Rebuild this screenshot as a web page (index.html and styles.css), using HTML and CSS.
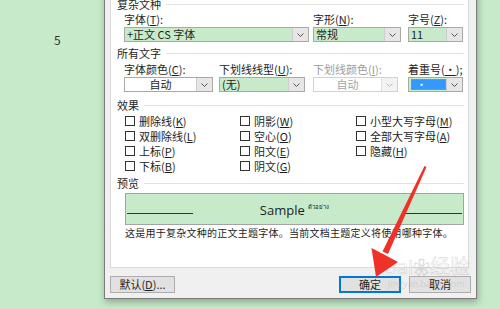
FILE: index.html
```html
<!DOCTYPE html>
<html lang="zh-CN">
<head>
    <meta charset="UTF-8">
    <title>字体</title>
    <link rel="stylesheet" href="styles.css">
</head>
<body>
<div class="page">
    <div class="side">5</div>
    <div class="dialog">
        <div class="panel">
            <div class="group-title">复杂文种</div>
            <div class="fields">
                <div class="field w-font">
                    <label>字体(<u>T</u>):</label>
                    <div class="combo green"><span class="value">+正文 CS 字体</span><span class="drop"><svg width="7" height="4" viewBox="0 0 7 4"><path d="M0.5 0.5 L3.5 3.5 L6.5 0.5" fill="none" stroke="#555" stroke-width="1"/></svg></span></div>
                </div>
                <div class="field w-style">
                    <label>字形(<u>N</u>):</label>
                    <div class="combo green"><span class="value">常规</span><span class="drop"><svg width="7" height="4" viewBox="0 0 7 4"><path d="M0.5 0.5 L3.5 3.5 L6.5 0.5" fill="none" stroke="#555" stroke-width="1"/></svg></span></div>
                </div>
                <div class="field w-size">
                    <label>字号(<u>Z</u>):</label>
                    <div class="combo green"><span class="value">11</span><span class="drop"><svg width="7" height="4" viewBox="0 0 7 4"><path d="M0.5 0.5 L3.5 3.5 L6.5 0.5" fill="none" stroke="#555" stroke-width="1"/></svg></span></div>
                </div>
            </div>

            <div class="group-title gap-top">所有文字</div>
            <div class="fields fields-second">
                <div class="field w-color">
                    <label>字体颜色(<u>C</u>):</label>
                    <div class="combo"><span class="value center">自动</span><span class="drop"><svg width="7" height="4" viewBox="0 0 7 4"><path d="M0.5 0.5 L3.5 3.5 L6.5 0.5" fill="none" stroke="#555" stroke-width="1"/></svg></span></div>
                </div>
                <div class="field w-line">
                    <label>下划线线型(<u>U</u>):</label>
                    <div class="combo green"><span class="value">(无)</span><span class="drop"><svg width="7" height="4" viewBox="0 0 7 4"><path d="M0.5 0.5 L3.5 3.5 L6.5 0.5" fill="none" stroke="#555" stroke-width="1"/></svg></span></div>
                </div>
                <div class="field w-linecolor disabled">
                    <label>下划线颜色(<u>I</u>):</label>
                    <div class="combo"><span class="value center">自动</span><span class="drop"><svg width="7" height="4" viewBox="0 0 7 4"><path d="M0.5 0.5 L3.5 3.5 L6.5 0.5" fill="none" stroke="#bbb" stroke-width="1"/></svg></span></div>
                </div>
                <div class="field w-emph">
                    <label>着重号(<u>·</u>);</label>
                    <div class="combo green"><span class="value"><span class="selected">·</span></span><span class="drop"><svg width="7" height="4" viewBox="0 0 7 4"><path d="M0.5 0.5 L3.5 3.5 L6.5 0.5" fill="none" stroke="#555" stroke-width="1"/></svg></span></div>
                </div>
            </div>

            <div class="group-title gap-effects">效果</div>
            <div class="effects">
                <div class="check"><span class="box"></span>删除线(<u>K</u>)</div>
                <div class="check"><span class="box"></span>阴影(<u>W</u>)</div>
                <div class="check"><span class="box"></span>小型大写字母(<u>M</u>)</div>
                <div class="check"><span class="box"></span>双删除线(<u>L</u>)</div>
                <div class="check"><span class="box"></span>空心(<u>O</u>)</div>
                <div class="check"><span class="box"></span>全部大写字母(<u>A</u>)</div>
                <div class="check"><span class="box"></span>上标(<u>P</u>)</div>
                <div class="check"><span class="box"></span>阳文(<u>E</u>)</div>
                <div class="check"><span class="box"></span>隐藏(<u>H</u>)</div>
                <div class="check"><span class="box"></span>下标(<u>B</u>)</div>
                <div class="check"><span class="box"></span>阴文(<u>G</u>)</div>
            </div>

            <div class="group-title gap-preview">预览</div>
            <div class="preview">
                <span class="base-line"></span>
                <span class="sample">Sample <sup>ตัวอย่าง</sup></span>
                <span class="base-line"></span>
            </div>
            <div class="desc">这是用于复杂文种的正文主题字体。当前文档主题定义将使用哪种字体。</div>
        </div>
        <div class="buttons">
            <button class="btn btn-default">默认(<u>D</u>)...</button>
            <button class="btn btn-ok">确定</button>
            <button class="btn btn-cancel">取消</button>
        </div>
    </div>
</div>

<div class="watermark">Bai<span class="paw">❀</span>经验<small>jingyan.baidu.com</small></div>

<svg class="arrow" width="500" height="309" viewBox="0 0 500 309">
    <polygon points="424.5,166 426.5,167 388,254 382.5,251.5" fill="#ee3129"/>
    <polygon points="376,277 371.5,248 385,255 398,262" fill="#ee3129"/>
</svg>
</body>
</html>
```

FILE: styles.css
```css
body {
    margin: 0;
    width: 500px;
    height: 309px;
    overflow: hidden;
    position: relative;
    background-color: #c7ebca;
    font-family: "Noto Sans CJK SC", "Noto Sans", sans-serif;
    font-size: 11px;
    color: #1e1e1e;
}
u {
    text-decoration: underline;
    text-underline-offset: 1px;
}
.page {
    display: flex;
    align-items: flex-start;
}
.side {
    width: 104px;
    box-sizing: border-box;
    padding: 33px 0 0 54px;
    font-size: 12px;
    line-height: 14px;
    color: #333;
}
.dialog {
    margin-top: -10px;
    width: 373px;
    box-sizing: border-box;
    background-color: #f0f0f0;
    border: 1px solid #7c7c7c;
    padding: 0 7px 5px 5px;
    box-shadow: 1px 3px 7px rgba(0, 0, 0, 0.3);
}
.panel {
    height: 277px;
    box-sizing: border-box;
    background-color: #fff;
    border: 1px solid #dadada;
    border-top: none;
    padding: 7px 4px 0 6px;
}
.group-title {
    display: flex;
    align-items: center;
    gap: 5px;
    height: 12px;
    line-height: 12px;
    white-space: nowrap;
}
.group-title::after {
    content: "";
    flex: 1;
    height: 1px;
    background-color: #e2e2e2;
}
.gap-top {
    margin-top: 5px;
}
.gap-effects {
    margin-top: 7px;
}
.gap-preview {
    margin-top: 4px;
}
.fields {
    display: flex;
    margin: 3px 0 0 7px;
}
.fields-second {
    margin-top: 4px;
}
.field label {
    display: block;
    height: 12px;
    line-height: 12px;
    white-space: nowrap;
}
.w-font { width: 185px; }
.w-style { width: 88px; margin-left: 4px; }
.w-size { width: 55px; margin-left: 7px; }
.w-color { width: 89px; }
.w-line { width: 86px; margin-left: 6px; }
.w-linecolor { width: 85px; margin-left: 8px; }
.w-emph { width: 55px; margin-left: 10px; }
.combo {
    margin-top: 2px;
    height: 15px;
    box-sizing: border-box;
    display: flex;
    border: 1px solid #a9a9a9;
    background-color: #fff;
}
.combo.green .value {
    background-color: #c7ebca;
}
.value {
    flex: 1;
    line-height: 13px;
    padding-left: 2px;
    white-space: nowrap;
}
.value.center {
    text-align: center;
    padding-left: 0;
}
.selected {
    display: block;
    margin: 1px 0 1px 0;
    width: 35px;
    height: 11px;
    box-sizing: border-box;
    border: 1px dotted #d08a5c;
    background-color: #3399ff;
    color: #fff;
    line-height: 9px;
    padding-left: 4px;
}
.drop {
    width: 15px;
    display: flex;
    align-items: center;
    justify-content: center;
    background-color: #e6e6e6;
    border-left: 1px solid #cdcdcd;
}
.disabled label {
    color: #9d9d9d;
}
.disabled .combo {
    border-color: #d2d2d2;
    color: #a6a6a6;
}
.disabled .drop {
    background-color: #f3f3f3;
    border-left-color: #dedede;
}
.effects {
    display: grid;
    grid-template-columns: 115px 116px auto;
    grid-auto-rows: 15px;
    margin: 2px 0 0 8px;
}
.check {
    display: flex;
    align-items: center;
    white-space: nowrap;
}
.box {
    width: 10px;
    height: 10px;
    box-sizing: border-box;
    border: 1px solid #333;
    background-color: #fff;
    margin-right: 4px;
}
.preview {
    margin: 4px 0 0 8px;
    height: 32px;
    box-sizing: border-box;
    border: 1px solid #a3a3a3;
    background-color: #c7ebca;
    display: grid;
    grid-template-columns: 66px 1fr 58px;
    align-items: end;
    padding: 0 1px 10px 1px;
}
.base-line {
    height: 1px;
    background-color: #333;
}
.sample {
    font-family: "Open Sans", "Noto Sans", sans-serif;
    font-size: 13px;
    line-height: 14px;
    text-align: center;
    margin-bottom: -3px;
    padding-right: 8px;
}
.sample sup {
    font-size: 6px;
    vertical-align: 6px;
}
.desc {
    margin: 2px 0 0 8px;
    height: 12px;
    line-height: 12px;
    font-size: 10px;
    letter-spacing: 0.25px;
    white-space: nowrap;
}
.buttons {
    display: flex;
    margin: 8px -2px 0 0;
}
.btn {
    height: 17px;
    box-sizing: border-box;
    padding: 0;
    border: 1px solid #adadad;
    background-color: #e1e1e1;
    font-family: inherit;
    font-size: 11px;
    line-height: 15px;
    color: #1e1e1e;
}
.btn-default {
    width: 65px;
}
.btn-ok {
    width: 62px;
    margin-left: auto;
    border: 2px solid #0078d7;
    line-height: 13px;
}
.btn-cancel {
    width: 62px;
    margin-left: 8px;
}
.watermark {
    position: absolute;
    left: 384px;
    top: 256px;
    font-family: "Open Sans", "Noto Sans CJK SC", sans-serif;
    font-size: 20px;
    line-height: 22px;
    color: rgba(255, 255, 255, 0.45);
    -webkit-text-stroke: 0.6px rgba(150, 150, 150, 0.35);
    white-space: nowrap;
}
.watermark .paw {
    font-size: 17px;
}
.watermark small {
    display: block;
    font-size: 9px;
    line-height: 10px;
    margin-left: 4px;
    -webkit-text-stroke: 0;
    color: rgba(170, 170, 170, 0.35);
}
.arrow {
    position: absolute;
    left: 0;
    top: 0;
}
```
